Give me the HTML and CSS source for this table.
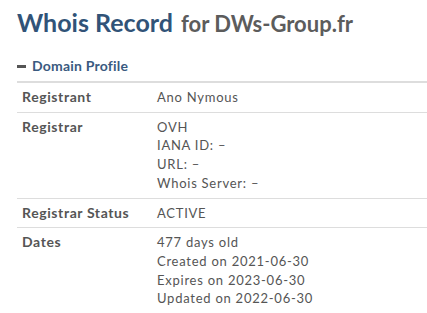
FILE: index.html
```html
<!DOCTYPE html>
<html lang="en">
<head>
<meta charset="utf-8">
<title>Whois Record for DWs-Group.fr</title>
<link rel="stylesheet" href="styles.css">
</head>
<body>
<main class="page">
  <h1 class="title">Whois Record <small class="domain">for DWs-Group.fr</small></h1>
  <section class="profile">
    <h2 class="section-head"><span class="toggle"></span>Domain Profile</h2>
    <table class="info">
      <tbody>
        <tr>
          <th>Registrant</th>
          <td>Ano Nymous</td>
        </tr>
        <tr>
          <th>Registrar</th>
          <td>OVH<br>IANA ID: –<br>URL: –<br>Whois Server: –</td>
        </tr>
        <tr>
          <th>Registrar Status</th>
          <td>ACTIVE</td>
        </tr>
        <tr>
          <th>Dates</th>
          <td>477 days old<br>Created on 2021-06-30<br>Expires on 2023-06-30<br>Updated on 2022-06-30</td>
        </tr>
      </tbody>
    </table>
  </section>
</main>
</body>
</html>
```

FILE: styles.css
```css
html, body {
  margin: 0;
  padding: 0;
  background: #fff;
}

body {
  font-family: Lato, "Open Sans", "Liberation Sans", sans-serif;
  color: #555;
  overflow: hidden;
}

.page {
  padding: 7px 0 0 17px;
}

.title {
  margin: 0;
  font-size: 25px;
  line-height: 30px;
  font-weight: 700;
  color: #315378;
}

.domain {
  margin-left: 2px;
  font-size: 22px;
  font-weight: 700;
  color: #5c5c5c;
}

.section-head {
  display: flex;
  align-items: center;
  margin: 17px 0 0;
  font-size: 14px;
  line-height: 20px;
  font-weight: 700;
  letter-spacing: 0.2px;
  color: #3a5a80;
}

.toggle {
  width: 9px;
  height: 3px;
  margin-right: 6px;
  background: #555;
}

.info {
  width: 100%;
  margin-top: 5px;
  border-collapse: collapse;
  border-top: 2px solid #ddd;
  font-size: 13px;
  line-height: 18.7px;
}

.info th,
.info td {
  padding: 5px 5px;
  text-align: left;
  vertical-align: top;
  border-bottom: 1px solid #ddd;
}

.info th {
  width: 125px;
  font-size: 14px;
  font-weight: 700;
  letter-spacing: 0.6px;
  color: #555;
  white-space: nowrap;
}

.info td {
  font-weight: 400;
  letter-spacing: 0.75px;
}
```
